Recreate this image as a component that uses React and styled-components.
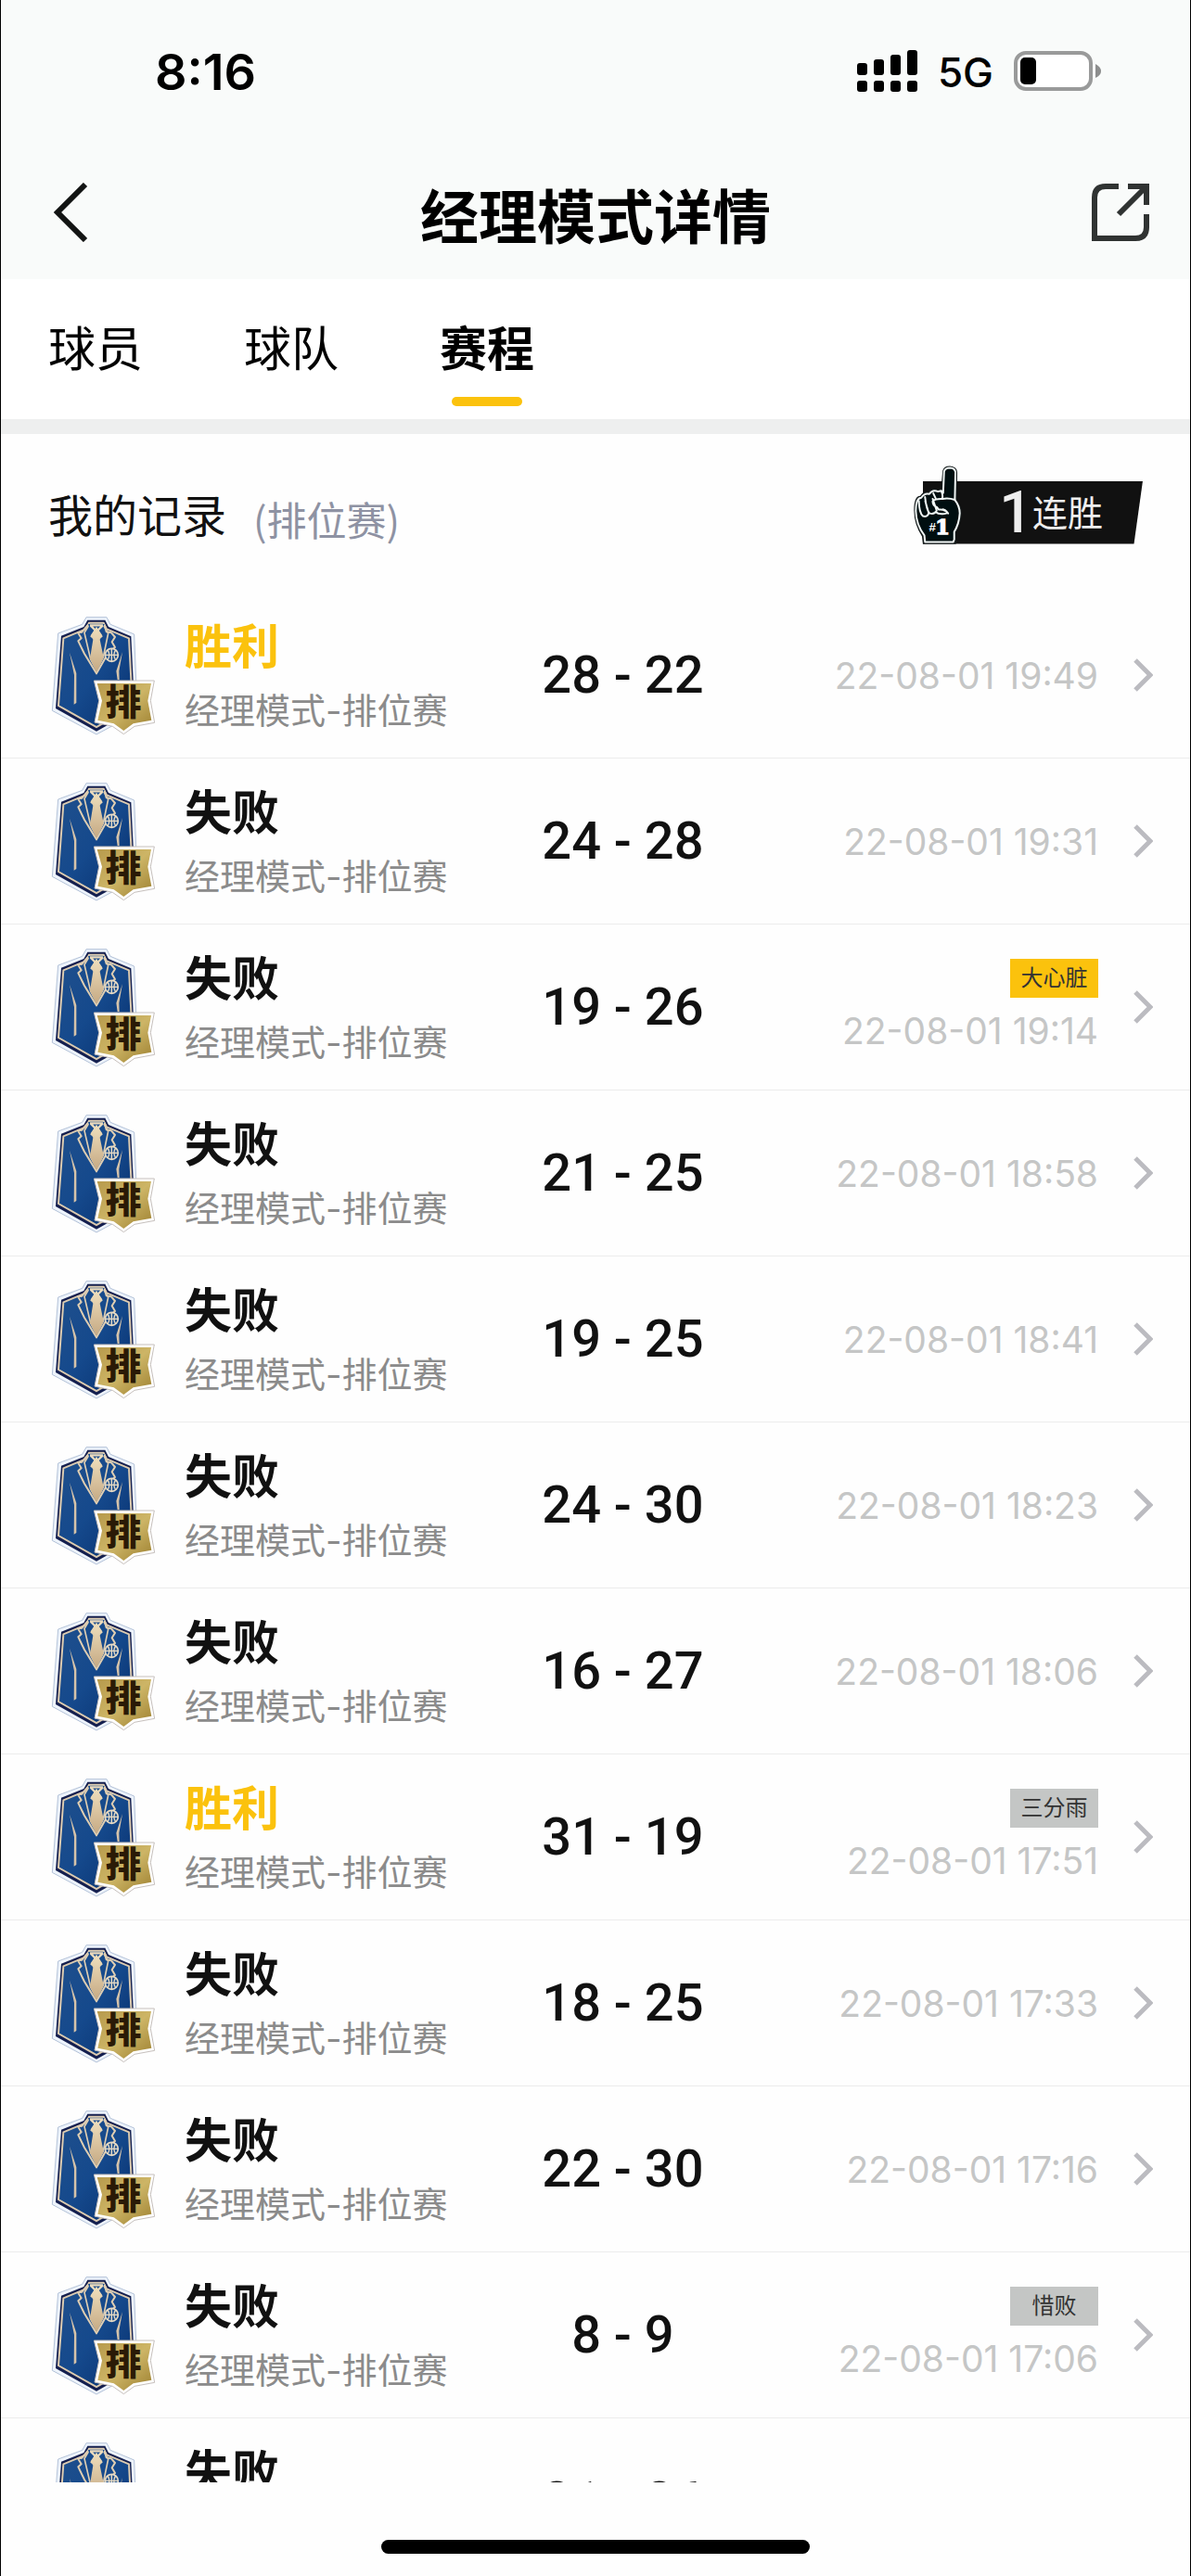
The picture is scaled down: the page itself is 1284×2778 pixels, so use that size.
import React from "react";
import styled, { createGlobalStyle } from "styled-components";

const matches = [
  { win: true, home: 28, away: 22, time: "22-08-01 19:49" },
  { home: 24, away: 28, time: "22-08-01 19:31" },
  { home: 19, away: 26, time: "22-08-01 19:14", tag: "大心脏", hot: true },
  { home: 21, away: 25, time: "22-08-01 18:58" },
  { home: 19, away: 25, time: "22-08-01 18:41" },
  { home: 24, away: 30, time: "22-08-01 18:23" },
  { home: 16, away: 27, time: "22-08-01 18:06" },
  { win: true, home: 31, away: 19, time: "22-08-01 17:51", tag: "三分雨" },
  { home: 18, away: 25, time: "22-08-01 17:33" },
  { home: 22, away: 30, time: "22-08-01 17:16" },
  { home: 8, away: 9, time: "22-08-01 17:06", tag: "惜败" },
  { home: 21, away: 26, time: "22-08-01 16:50" },
];

const tabs = ["球员", "球队", "赛程"];

const SuitIcon = () => (
  <SuitSvg viewBox="45 40 339 390" aria-hidden="true">
    <defs>
      <linearGradient id="suit" x1="0" y1="0" x2="1" y2="1">
        <stop offset="0" stopColor="#20508d" />
        <stop offset="0.5" stopColor="#15498c" />
        <stop offset="0.8" stopColor="#0d3a7a" />
        <stop offset="1" stopColor="#3f7dc0" />
      </linearGradient>
      <linearGradient id="gold" x1="0" y1="0" x2="1" y2="1">
        <stop offset="0" stopColor="#b79a4c" />
        <stop offset="0.5" stopColor="#cdb566" />
        <stop offset="1" stopColor="#9d8030" />
      </linearGradient>
      <linearGradient id="tie" x1="0" y1="0" x2="0" y2="1">
        <stop offset="0" stopColor="#efdfbd" />
        <stop offset="1" stopColor="#c5a983" />
      </linearGradient>
    </defs>
    <path
      d="M159 48H225L237 71L314 103L320 250L331 352L192 427L49 350L68 100L146 71Z"
      fill="#eef4fc"
      stroke="#b3c2d8"
      strokeWidth="3"
      strokeLinejoin="round"
    />
    <path
      d="M163 57H220L231 79L304 110L311 250L320 345L192 417L60 343L78 108L151 79Z"
      fill="#141f4f"
    />
    <path
      d="M168 66H215L225 86L297 116L304 250L310 335L192 403L69 334L85 116L158 86Z"
      fill="url(#suit)"
      stroke="#dccbb0"
      strokeWidth="6"
    />
    <path d="M166 70H217L230 106L214 185L194 232L171 190L150 105Z" fill="#184b8c" />
    <path
      d="M165 72L145 96L132 98L143 116L133 125L153 166L192 230L232 160L252 145L242 128L252 112L240 98L224 95L218 72"
      fill="none"
      stroke="#dfceb2"
      strokeWidth="6"
      strokeLinejoin="round"
    />
    <path d="M166 76L153 98L173 184L192 219L214 177L230 100L216 76" fill="none" stroke="#dfceb2" strokeWidth="5" />
    <path d="M173 75L210 112M212 75L174 112M171 74H213" stroke="#eadabd" strokeWidth="7" />
    <path d="M192 78L211 107L203 120L215 178L192 226L171 182L181 120L173 107Z" fill="url(#tie)" />
    <path d="M105 162L120 235L119 330L127 325L127 229Z" fill="#d5c3aa" />
    <path d="M276 160L256 222L260 250H266L265 222Z" fill="#d5c3aa" />
    <circle cx="241" cy="170" r="21" fill="#26558f" stroke="#e8dbc4" strokeWidth="5" />
    <path
      d="M241 149V191M220 170H262M228 154Q239 170 228 186M254 154Q243 170 254 186"
      fill="none"
      stroke="#e8dbc4"
      strokeWidth="4"
    />
    <path
      d="M184 253H379L367 318L380 389L315 401L280 426L244 401L186 388L200 318Z"
      fill="#fff"
      stroke="#c6c0bd"
      strokeWidth="3"
    />
    <path d="M194 262H369L358 318L370 381L311 392L280 415L248 392L196 381L210 318Z" fill="url(#gold)" />
    <SuitText x="279" y="363" textAnchor="middle">
      排
    </SuitText>
  </SuitSvg>
);

const FoamHand = () => (
  <HandSvg viewBox="75 32 160 258" aria-hidden="true">
    <path
      d="M105 290L102 265Q76 225 76 180Q76 134 96 133Q106 117 122 121Q134 104 152 113L164 109L169 52Q173 36 193 36Q216 38 217 56L216 145Q232 168 231 190Q229 226 213 252V290Z"
      fill="#151b1c"
    />
    <path
      d="M112 283L110 262Q83 226 82 182Q82 140 100 139Q110 123 126 127Q137 111 154 119Q168 113 171 124L174 54Q178 42 193 42Q209 43 211 56L209 146Q225 166 225 190Q223 224 207 250V275L204 283Z"
      fill="#000e10"
      stroke="#f1f6f5"
      strokeWidth="6"
      strokeLinejoin="round"
    />
    <path
      d="M92 150Q93 188 105 199Q121 203 124 189L113 151M112 137Q117 181 127 190Q143 195 150 181L137 143M139 125L148 144M165 117Q171 132 168 141M209 146Q188 139 169 143Q144 142 137 151Q136 164 151 170L157 178Q178 176 187 190Q178 178 170 177M146 185Q158 196 181 190"
      fill="none"
      stroke="#f1f6f5"
      strokeWidth="6"
      strokeLinecap="round"
      strokeLinejoin="round"
    />
    <HashText x="125" y="249">
      #
    </HashText>
    <OneText x="145" y="257">
      1
    </OneText>
  </HandSvg>
);

const App = () => {
  return (
    <>
      <GlobalStyle />
      <Page>
        <StatusBar>
          <Clock>8:16</Clock>
          <StatusIcons>
            <svg width="65" height="45" viewBox="0 0 65 45" aria-hidden="true">
              <rect x="0" y="14" width="11" height="13" rx="3" />
              <rect x="18" y="10" width="11" height="17" rx="3" />
              <rect x="36" y="5" width="11" height="22" rx="3" />
              <rect x="54" y="0" width="11" height="27" rx="3" />
              <rect x="0" y="33" width="11" height="12" rx="3" />
              <rect x="18" y="33" width="11" height="12" rx="3" />
              <rect x="36" y="33" width="11" height="12" rx="3" />
              <rect x="54" y="33" width="11" height="12" rx="3" />
            </svg>
            <Network>5G</Network>
            <svg width="95" height="43" viewBox="0 0 95 43" aria-hidden="true">
              <rect x="2" y="2" width="81" height="39" rx="11" fill="#fff" stroke="#999a9a" strokeWidth="4" />
              <rect x="7" y="7" width="17" height="29" rx="5" />
              <path d="M88 14Q94 17 94 22Q94 26 88 29Z" fill="#8d8e8e" />
            </svg>
          </StatusIcons>
        </StatusBar>
        <Header>
          <IconButton aria-label="返回">
            <svg width="38" height="64" viewBox="0 0 38 64" aria-hidden="true">
              <path d="M35 2L5 32L35 62" fill="none" stroke="#121413" strokeWidth="6" />
            </svg>
          </IconButton>
          <Title>经理模式详情</Title>
          <IconButton aria-label="分享">
            <svg width="62" height="62" viewBox="0 0 62 62" aria-hidden="true">
              <path
                d="M29 3H15Q3 3 3 15V59H47Q59 59 59 47V33M39 3H59V23M58 4L29 33"
                fill="none"
                stroke="#303332"
                strokeWidth="6"
              />
            </svg>
          </IconButton>
        </Header>
        <Tabs>
          {tabs.map((item) => (
            <Tab key={item} $active={item === "赛程"}>
              {item}
            </Tab>
          ))}
        </Tabs>
        <RecordHead>
          <RecordTitle>我的记录</RecordTitle>
          <RecordMode>(排位赛)</RecordMode>
          <Streak>
            <FoamHand />
            <StreakLabel>
              <StreakCount>1</StreakCount>连胜
            </StreakLabel>
          </Streak>
        </RecordHead>
        <MatchList>
          {matches.map((match) => (
            <li key={match.time}>
              <MatchRow href="#match">
                <SuitIcon />
                <Info>
                  <Result $win={match.win}>{match.win ? "胜利" : "失败"}</Result>
                  <Mode>经理模式-排位赛</Mode>
                </Info>
                <Score>
                  {match.home} - {match.away}
                </Score>
                <When>
                  {match.tag && <Tag $hot={match.hot}>{match.tag}</Tag>}
                  <Time>{match.time}</Time>
                </When>
                <svg width="21" height="36" viewBox="0 0 21 36" aria-hidden="true">
                  <path d="M2 2L18 18L2 34" fill="none" stroke="#bbbbc0" strokeWidth="5" />
                </svg>
              </MatchRow>
            </li>
          ))}
        </MatchList>
        <BottomBar>
          <HomeIndicator />
        </BottomBar>
      </Page>
    </>
  );
};

const GlobalStyle = createGlobalStyle`
  * {
    box-sizing: border-box;
  }
  body {
    margin: 0;
    background: #fefefe;
    color: #111;
    font-family: Inter, "Noto Sans CJK SC", sans-serif;
  }
  button {
    padding: 0;
    border: 0;
    background: none;
    color: inherit;
    font: inherit;
  }
  svg {
    display: block;
    flex-shrink: 0;
  }
`;

const Page = styled.div`
  display: flex;
  flex-direction: column;
  height: 100vh;
  border: solid #000;
  border-width: 0 1px;
`;

const StatusBar = styled.div`
  display: flex;
  flex-shrink: 0;
  align-items: center;
  justify-content: space-between;
  height: 152px;
  padding: 0 95px 0 166px;
  background: #f9fbfa;
  color: #000;
`;

const Clock = styled.div`
  padding-top: 4px;
  font-size: 54px;
  font-weight: 600;
  line-height: 60px;
`;

const StatusIcons = styled.div`
  display: flex;
  align-items: center;
  gap: 22px;
`;

const Network = styled.div`
  padding-top: 4px;
  font-size: 44px;
  font-weight: 500;
  line-height: 44px;
`;

const Header = styled.header`
  display: grid;
  flex-shrink: 0;
  grid-template-columns: 1fr auto 1fr;
  align-items: center;
  height: 149px;
  padding: 4px 44px 0 56px;
  background: #f9fbfa;

  > :last-child {
    justify-self: end;
  }
`;

const IconButton = styled.button`
  display: flex;
`;

const Title = styled.h1`
  margin: 0;
  padding: 10px 12px 0 0;
  color: #000;
  font-size: 63px;
  font-weight: 700;
  line-height: 80px;
`;

const Tabs = styled.nav`
  display: flex;
  flex-shrink: 0;
  gap: 109px;
  height: 167px;
  padding-left: 51px;
  background: #fff;
  border-bottom: 16px solid #eeefef;
`;

const Tab = styled.button`
  display: flex;
  flex-direction: column;
  align-items: center;
  padding-top: 38px;
  color: #000;
  font-size: 51px;
  font-weight: ${({ $active }) => ($active ? 700 : 400)};
  line-height: 76px;

  &::after {
    content: "";
    width: 76px;
    height: 10px;
    margin-top: 13px;
    border-radius: 5px;
    background: ${({ $active }) => ($active ? "#fbc20d" : "transparent")};
  }
`;

const RecordHead = styled.div`
  display: flex;
  flex-shrink: 0;
  align-items: center;
  height: 171px;
  padding: 0 51px;
`;

const RecordTitle = styled.h2`
  margin: 6px 0 0;
  font-size: 48px;
  font-weight: 400;
  line-height: 72px;
`;

const RecordMode = styled.span`
  margin: 10px auto 0 29px;
  color: #8e92a3;
  font-family: "Noto Sans CJK SC", sans-serif;
  font-size: 43px;
  line-height: 64px;
`;

const Streak = styled.div`
  display: flex;
  align-items: flex-end;
  margin-bottom: 20px;
`;

const HandSvg = styled.svg`
  position: relative;
  z-index: 1;
  width: 53px;
  height: 86px;
`;

const HashText = styled.text`
  fill: #fff;
  font: bold 40px "Liberation Sans", sans-serif;
`;

const OneText = styled.text`
  fill: #fff;
  stroke: #fff;
  stroke-width: 4px;
  font: bold 68px "DejaVu Serif", serif;
`;

const StreakLabel = styled.div`
  display: flex;
  align-items: center;
  justify-content: flex-end;
  width: 237px;
  height: 68px;
  margin-left: -43px;
  padding-right: 43px;
  background: #111;
  clip-path: polygon(0 0, 100% 0, 96% 100%, 0 100%);
  color: #eee;
  font-size: 38px;
  line-height: 60px;
`;

const StreakCount = styled.span`
  font-family: Roboto, sans-serif;
  font-size: 63px;
  font-weight: 500;
`;

const MatchList = styled.ul`
  flex: 1;
  min-height: 0;
  margin: 0;
  padding: 0;
  overflow: hidden;
  list-style: none;
`;

const MatchRow = styled.a`
  display: grid;
  grid-template-columns: 144px 34fr 26fr 38fr 59px;
  align-items: center;
  height: 179px;
  padding: 0 40px 0 54px;
  border-bottom: 1px solid #ececec;
  color: #111;
  text-decoration: none;

  > :last-child {
    justify-self: end;
  }
`;

const SuitSvg = styled.svg`
  width: 113px;
  height: 130px;
`;

const SuitText = styled.text`
  fill: #2a1a06;
  font: 900 116px "Noto Sans CJK SC", sans-serif;
`;

const Info = styled.div`
  padding-top: 8px;
  white-space: nowrap;
`;

const Result = styled.div`
  color: ${({ $win }) => ($win ? "#fbc20d" : "#111")};
  font-size: 51px;
  font-weight: 700;
  line-height: 68px;
`;

const Mode = styled.div`
  color: #8b8b8b;
  font-size: 38px;
  line-height: 68px;
`;

const Score = styled.div`
  font-family: Roboto, sans-serif;
  font-size: 56px;
  font-weight: 500;
  line-height: 68px;
  text-align: center;
  white-space: nowrap;
`;

const When = styled.div`
  display: flex;
  flex-direction: column;
  align-items: flex-end;
  gap: 8px;
  padding-top: 2px;
  white-space: nowrap;
`;

const Tag = styled.span`
  width: 95px;
  color: #333;
  background: ${({ $hot }) => ($hot ? "#fbc20d" : "#c4c6c5")};
  font-size: 24px;
  line-height: 42px;
  text-align: center;
`;

const Time = styled.time`
  color: #c5c6c6;
  font-size: 39px;
  line-height: 56px;
`;

const BottomBar = styled.div`
  display: flex;
  flex-shrink: 0;
  align-items: flex-end;
  justify-content: center;
  height: 101px;
  padding-bottom: 24px;
`;

const HomeIndicator = styled.div`
  width: 36%;
  height: 15px;
  border-radius: 8px;
  background: #000;
`;

export default App;
